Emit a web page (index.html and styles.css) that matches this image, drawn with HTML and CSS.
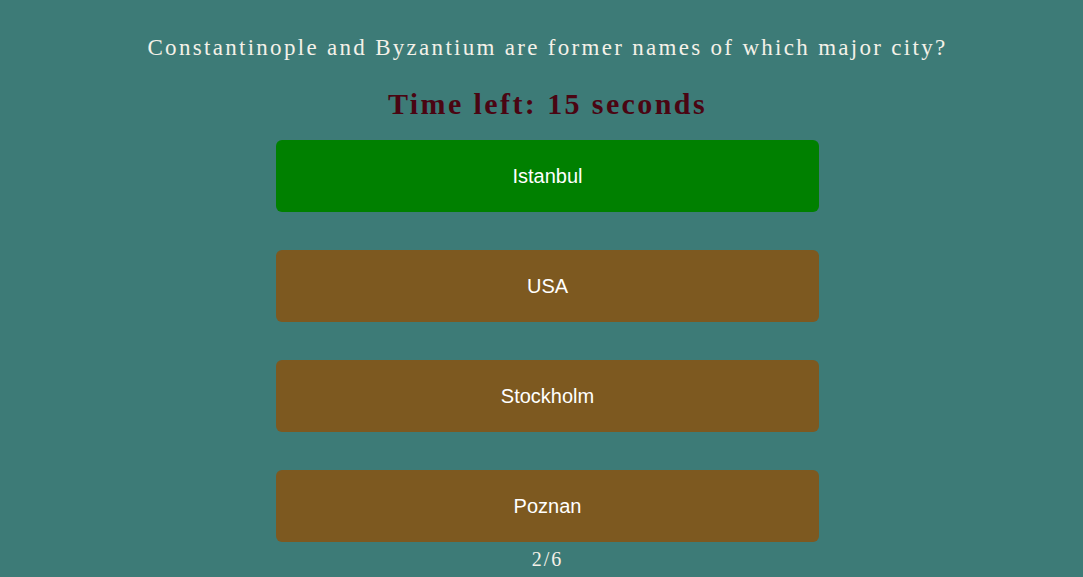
FILE: index.html
```html
<!DOCTYPE html>
<html>
<head>
<meta charset="utf-8">
<link rel="stylesheet" href="styles.css">
</head>
<body>
<main class="quiz">
  <h2 class="question">Constantinople and Byzantium are former names of which major city?</h2>
  <h1 class="timer">Time left: 15 seconds</h1>
  <div class="answers">
    <button class="answer correct">Istanbul</button>
    <button class="answer">USA</button>
    <button class="answer">Stockholm</button>
    <button class="answer">Poznan</button>
  </div>
  <p class="progress">2/6</p>
</main>
</body>
</html>
```
FILE: styles.css
```css
html, body {
  margin: 0;
  padding: 0;
  background: #3d7b77;
  height: 100%;
}
body {
  font-family: "Liberation Serif", "Times New Roman", serif;
  color: #f4f1e8;
}
.quiz {
  display: flex;
  flex-direction: column;
  align-items: center;
  padding-top: 34px;
  padding-left: 12px;
}
.question {
  margin: 0;
  font-size: 23px;
  font-weight: normal;
  letter-spacing: 2.3px;
  line-height: 28px;
}
.timer {
  margin: 25px 0 0;
  font-size: 30px;
  font-weight: bold;
  letter-spacing: 2.4px;
  line-height: 34px;
  color: #4a0512;
}
.answers {
  display: flex;
  flex-direction: column;
  gap: 38px;
  margin-top: 19px;
}
.answer {
  width: 543px;
  height: 72px;
  border: none;
  border-radius: 6px;
  background: #7d5920;
  color: #ffffff;
  font-family: "Liberation Sans", Arial, sans-serif;
  font-size: 20px;
}
.answer.correct {
  background: #008000;
}
.progress {
  margin: 5px 0 0;
  font-size: 20px;
  letter-spacing: 2px;
  line-height: 24px;
}
```
